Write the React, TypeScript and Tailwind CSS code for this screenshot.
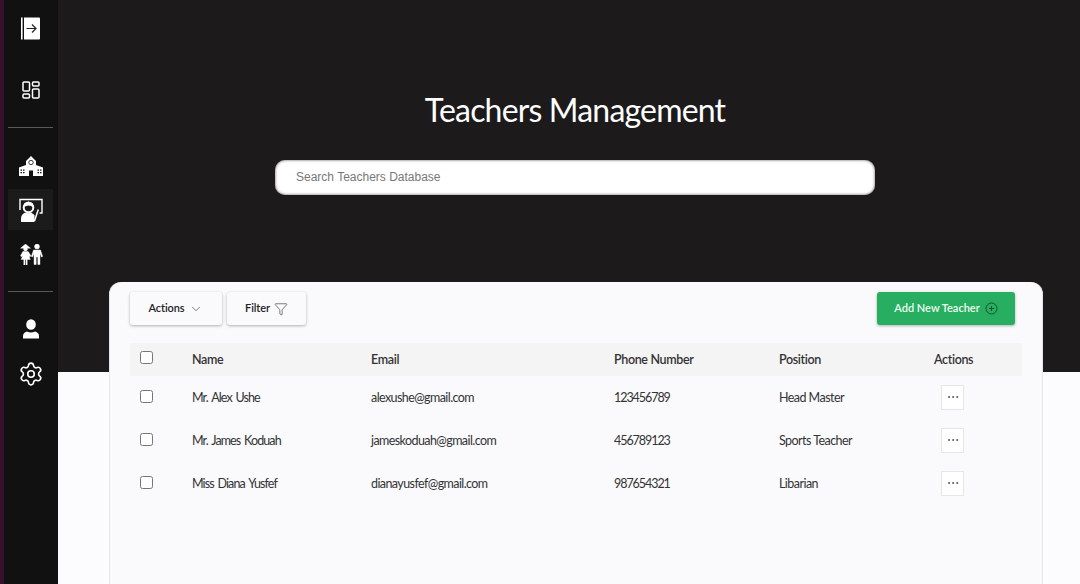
import React from 'react'
import { ChevronDown, Ellipsis, Funnel, Settings } from 'lucide-react'

interface Teacher {
  name: string
  email: string
  phone: string
  position: string
}

const teachers: Teacher[] = [
  { name: 'Mr. Alex Ushe', email: 'alexushe@gmail.com', phone: '123456789', position: 'Head Master' },
  { name: 'Mr. James Koduah', email: 'jameskoduah@gmail.com', phone: '456789123', position: 'Sports Teacher' },
  { name: 'Miss Diana Yusfef', email: 'dianayusfef@gmail.com', phone: '987654321', position: 'Libarian' },
]

const ExitIcon = () => (
  <svg width="19" height="23" viewBox="0 0 19 23">
    <rect x="0" y="0.500" width="1.600" height="22" fill="#fff" />
    <path d="M3 0.500h15a1 1 0 0 1 1 1v20a1 1 0 0 1-1 1H3z" fill="#fff" />
    <path d="M5.500 11.500h9.500M11 7.500l4 4-4 4" fill="none" stroke="#222" strokeWidth="1.200" />
  </svg>
)

const DashboardIcon = () => (
  <svg width="18" height="18" viewBox="0 0 18 18" fill="none" stroke="#fff" strokeWidth="1.500">
    <rect x="1" y="1" width="6.500" height="9" rx="1" />
    <rect x="1" y="13" width="6.500" height="4" rx="1" />
    <rect x="10.500" y="1" width="6.500" height="4" rx="1" />
    <rect x="10.500" y="8" width="6.500" height="9" rx="1" />
  </svg>
)

const SchoolIcon = () => (
  <svg width="24" height="20" viewBox="0 0 24 20">
    <path d="M12 0l5 5v4l7 2.500V20H0v-8.500L7 9V5z" fill="#fff" />
    <circle cx="12" cy="6.500" r="2.200" fill="none" stroke="#111" strokeWidth="0.800" />
    <path d="M10 20v-5.500h4V20z" fill="#111" />
    <path
      d="M1.500 13.500h1.500v1.300H1.500zM4 13.500h1.500v1.300H4zM1.500 16h1.500v1.300H1.500zM4 16h1.500v1.300H4zM18.500 13.500H20v1.300h-1.500zM21 13.500h1.500v1.300H21zM18.500 16H20v1.300h-1.500zM21 16h1.500v1.300H21z"
      fill="#111"
    />
  </svg>
)

const TeacherIcon = () => (
  <svg width="24" height="24" viewBox="0 0 24 24">
    <path d="M1 12V1.500h22V15h-2.500" fill="none" stroke="#fff" strokeWidth="1.400" />
    <circle cx="9.500" cy="9.500" r="4.800" fill="none" stroke="#fff" strokeWidth="2" />
    <path d="M5 9q4.500-3 9 0l-.5-4-4-1.500-4 1.500z" fill="#fff" />
    <path d="M2 24v-3q0-5.500 5-6.500 2.500 1.500 5 0l3.500 2.500v7z" fill="#fff" />
    <path d="M15.500 23l3.800-11.500" stroke="#fff" strokeWidth="1.500" />
  </svg>
)

const KidsIcon = () => (
  <svg width="24" height="21" viewBox="0 0 24 21" fill="#fff" stroke="#fff" strokeWidth="0.400">
    <path d="M6.500 0l5 4.200h-10z" />
    <circle cx="6.500" cy="5" r="2" />
    <path d="M3.800 7.500h5.400l2.800 4.500-1.300.8-1.200-1.800 1.800 4.500H8.200v5.500H7v-5.500H6v5.500H4.800v-5.500H2.200l1.800-4.500-1.200 1.800-1.300-.8z" />
    <circle cx="18" cy="2.600" r="2.500" />
    <path d="M14.500 6h7l2.200 6.500-1.300.5-1.400-3.800v11.300h-2.200v-7.500h-1.600v7.500h-2.200V9.200l-1.400 3.800-1.300-.5z" />
  </svg>
)

const UserIcon = () => (
  <svg width="16" height="20" viewBox="0 0 16 20" fill="#fff">
    <ellipse cx="8" cy="5.500" rx="4.800" ry="5.300" />
    <path d="M0 19.500v-2.500q0-3.500 4-4.500 4 2 8 0 4 1 4 4.500v2.500z" />
  </svg>
)

const AddIcon = () => (
  <svg width="13" height="13" viewBox="0 0 13 13" fill="none" stroke="#14532d" strokeWidth="1">
    <circle cx="6.500" cy="6.500" r="5.500" />
    <path d="M6.500 4v5M4 6.500h5" />
  </svg>
)

const App: React.FC = () => {
  return (
    <div className="flex h-[584px] w-[1080px] overflow-hidden bg-[#fcfcff] font-['Lato',sans-serif]">
      <aside className="flex w-[58px] shrink-0 flex-col items-center border-l-[4px] border-l-[#35122b] bg-[#111111] pl-[4px] pr-[5px]">
        <div className="mt-[17px] flex h-[23px] items-center"><ExitIcon /></div>
        <div className="mt-[41px] flex h-[18px] items-center"><DashboardIcon /></div>
        <div className="mt-[28px] h-px w-full bg-[#5a5a5a]" />
        <div className="mt-[28px] flex h-[20px] items-center"><SchoolIcon /></div>
        <div className="mt-[13px] flex h-[41px] w-full items-center justify-center bg-[#1c1b1c]"><TeacherIcon /></div>
        <div className="mt-[14px] flex h-[21px] items-center"><KidsIcon /></div>
        <div className="mt-[26px] h-px w-full bg-[#5a5a5a]" />
        <div className="mt-[27px] flex h-[20px] items-center"><UserIcon /></div>
        <div className="mt-[23px] flex h-[24px] items-center">
          <Settings size={26} color="#fff" strokeWidth={1.500} />
        </div>
      </aside>

      <main className="flex min-w-0 flex-1 flex-col">
        <section className="flex h-[372px] shrink-0 flex-col items-center bg-[#1c1a1b] pl-[12px]">
          <h1 className="mt-[90px] text-[32px] leading-[40px] tracking-[-0.82px] text-white">Teachers Management</h1>
          <input
            className="mt-[30px] h-[35px] w-[600px] rounded-[10px] bg-white px-[21px] pb-[2px] font-['Liberation_Sans',sans-serif] text-[12px] shadow-[inset_0_0_3px_#555] outline-none placeholder:text-[#777777]"
            placeholder="Search Teachers Database"
          />
        </section>

        <section className="-mt-[90px] ml-[51px] mr-[37px] flex-1 rounded-t-[12px] border-x border-x-[#e6e6ea] bg-[#fafafd] px-[20px] pt-[10px]">
          <div className="flex items-start justify-between pr-[7px]">
            <div className="flex gap-[5px]">
              <button className="flex h-[33px] w-[92px] items-center justify-center gap-[5px] rounded-[3px] bg-[#fafafd] text-[11px] font-semibold tracking-[-0.1px] text-[#222] shadow-[0_1px_3px_rgba(0,0,0,0.3)]">
                Actions <ChevronDown size={14} strokeWidth={1} />
              </button>
              <button className="flex h-[33px] w-[79px] items-center justify-center gap-[4px] rounded-[3px] bg-[#fafafd] text-[11px] font-semibold tracking-[-0.1px] text-[#222] shadow-[0_1px_3px_rgba(0,0,0,0.3)]">
                Filter <Funnel size={14} strokeWidth={1} />
              </button>
            </div>
            <button className="flex h-[33px] w-[138px] items-center justify-center gap-[5px] rounded-[3px] bg-[#27ae60] text-[11px] font-semibold text-[#ecfdf3] shadow-[0_1px_3px_rgba(0,0,0,0.3)]">
              Add New Teacher <AddIcon />
            </button>
          </div>

          <div className="mt-[18px] grid h-[33px] grid-cols-[62px_179px_243px_165px_155px_88px] items-center bg-[#f4f4f5] text-[12.500px] font-semibold tracking-[-0.35px] text-[#333]">
            <input type="checkbox" className="mb-[4px] ml-[10px] h-[13px] w-[13px]" />
            <span className="pt-[2px]">Name</span>
            <span className="pt-[2px]">Email</span>
            <span className="pt-[2px]">Phone Number</span>
            <span className="pt-[2px]">Position</span>
            <span className="pt-[2px]">Actions</span>
          </div>

          {teachers.map((t) => (
            <div
              key={t.email}
              className="grid h-[43px] grid-cols-[62px_179px_243px_165px_155px_88px] items-center text-[12.500px] text-[#333]"
            >
              <input type="checkbox" className="mb-[2px] ml-[10px] h-[13px] w-[13px]" />
              <span className="pt-[2px] tracking-[-0.9px] [word-spacing:1.500px]">{t.name}</span>
              <span className="pt-[2px] tracking-[-0.58px]">{t.email}</span>
              <span className="pt-[2px] tracking-[-1.05px]">{t.phone}</span>
              <span className="pt-[2px] tracking-[-0.55px]">{t.position}</span>
              <button className="ml-[7px] flex h-[25px] w-[23px] items-center justify-center border border-[#e6e6e6] bg-white pb-[2px]">
                <Ellipsis size={14} color="#333" strokeWidth={1.200} />
              </button>
            </div>
          ))}
        </section>
      </main>
    </div>
  )
}

export default App
